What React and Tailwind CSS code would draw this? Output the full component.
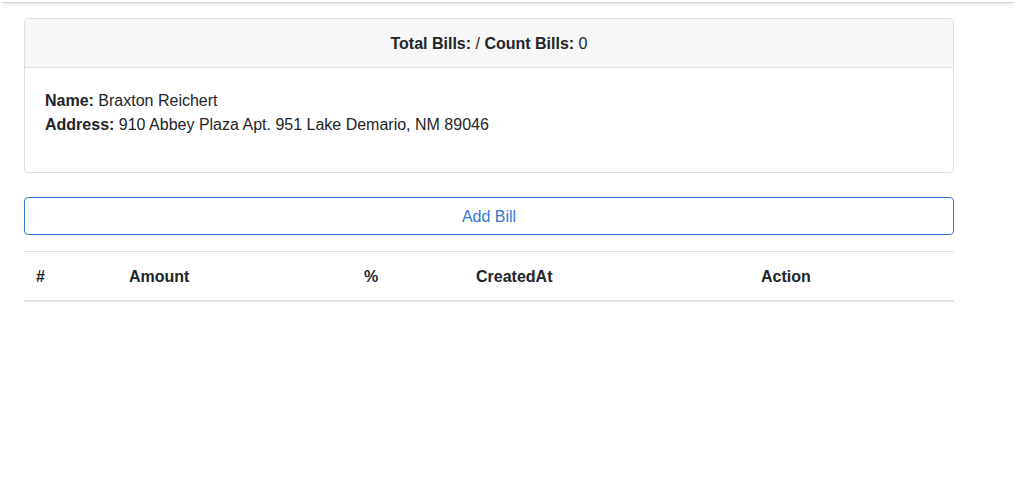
import React from 'react';

// ── Cabecera de la tabla de facturas ─────────────────────────────────────────
const columns = [
    { label: '#', width: 'w-[93px]' },
    { label: 'Amount', width: 'w-[235px]' },
    { label: '%', width: 'w-[112px]' },
    { label: 'CreatedAt', width: 'w-[285px]' },
    { label: 'Action', width: 'w-[205px]' },
];

const App = () => {
    const customer = {
        name: 'Braxton Reichert',
        address: '910 Abbey Plaza Apt. 951 Lake Demario, NM 89046',
    };

    return (
        <div className="min-h-[500px] bg-white text-[#212529] text-base leading-6 font-['Liberation_Sans',Arial,sans-serif]">
            <div className="h-[3px] border-b border-[#d4d4d4] shadow-[0_1px_4px_rgba(0,0,0,0.12)] mx-[2px]" />

            <div className="pl-6 pr-[62px] pt-[15px]">
                <div className="border border-[#dfdfdf] rounded-[4px] overflow-hidden">
                    <div className="bg-[#f7f7f7] border-b border-[#dfdfdf] px-5 pt-[13px] pb-[11px] text-center">
                        <b>Total Bills:</b> / <b>Count Bills:</b> 0
                    </div>
                    <div className="pt-[21px] pb-[19px] px-5">
                        <p className="mb-4">
                            <b>Name:</b> {customer.name}
                            <br />
                            <b>Address:</b> {customer.address}
                        </p>
                    </div>
                </div>

                <button className="mt-6 w-full h-[38px] pt-[2px] border border-[#3478d4] rounded-[4px] text-[#3478d4] text-base">
                    Add Bill
                </button>

                <table className="mt-4 w-full border-collapse">
                    <thead>
                        <tr>
                            {columns.map((c) => (
                                <th key={c.label} className={`${c.width} px-3 pt-[13px] pb-[11px] text-left font-bold border-t border-t-[#dee2e6] border-b-2 border-b-[#dee2e6]`}>
                                    {c.label}
                                </th>
                            ))}
                        </tr>
                    </thead>
                    <tbody />
                </table>
            </div>
        </div>
    );
};

export default App;
